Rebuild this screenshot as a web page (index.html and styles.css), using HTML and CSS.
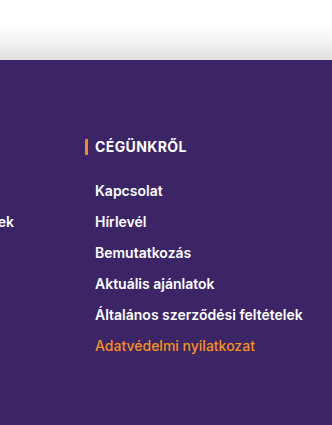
FILE: index.html
```html
<!DOCTYPE html>
<html lang="hu">
<head>
<meta charset="UTF-8">
<meta name="viewport" content="width=device-width, initial-scale=1.0">
<title>Lábléc</title>
<link rel="stylesheet" href="styles.css">
</head>
<body>
  <div class="top"></div>
  <footer class="footer">
    <div class="col col-prev">
      <h3 class="col-title">Vásárlás</h3>
      <ul class="links">
        <li class="hidden"><a href="#">Szállítás</a></li>
        <li><a href="#">Akciós termékek</a></li>
      </ul>
    </div>
    <div class="col">
      <h3 class="col-title">Cégünkről</h3>
      <ul class="links">
        <li><a href="#">Kapcsolat</a></li>
        <li><a href="#">Hírlevél</a></li>
        <li><a href="#">Bemutatkozás</a></li>
        <li><a href="#">Aktuális ajánlatok</a></li>
        <li><a href="#">Általános szerződési feltételek</a></li>
        <li><a href="#" class="active">Adatvédelmi nyilatkozat</a></li>
      </ul>
    </div>
  </footer>
</body>
</html>
```

FILE: styles.css
```css
html, body {
  margin: 0;
  padding: 0;
  height: 100%;
  overflow: hidden;
}

body {
  font-family: Inter, "Noto Sans", sans-serif;
  background-color: #3b2566;
}

.top {
  height: 60px;
  background: linear-gradient(#ffffff 35%, #f6f6f6 65%, #dfdfdf);
}

.footer {
  display: flex;
  gap: 71px;
  padding-top: 79px;
}

.col-title {
  margin: 0 0 25px;
  padding-left: 7px;
  border-left: 3px solid #f28a1e;
  color: #fff;
  font-size: 14px;
  font-weight: 700;
  letter-spacing: 0.4px;
  line-height: 16px;
  text-transform: uppercase;
}

.links {
  list-style: none;
  margin: 0;
  padding: 0 0 0 10px;
  display: flex;
  flex-direction: column;
  gap: 10px;
}

.links li {
  white-space: nowrap;
  line-height: 20px;
}

.links a {
  color: #fff;
  font-size: 14px;
  font-weight: 600;
  text-decoration: none;
}

.links a.active {
  color: #f7901e;
  font-weight: 500;
}

/* previous column only shows its overflowing tail */
.col-prev {
  width: 14px;
}

.col-prev .col-title,
.col-prev .hidden {
  visibility: hidden;
}

.col-prev .links {
  padding-left: 0;
  align-items: flex-end;
}
```
